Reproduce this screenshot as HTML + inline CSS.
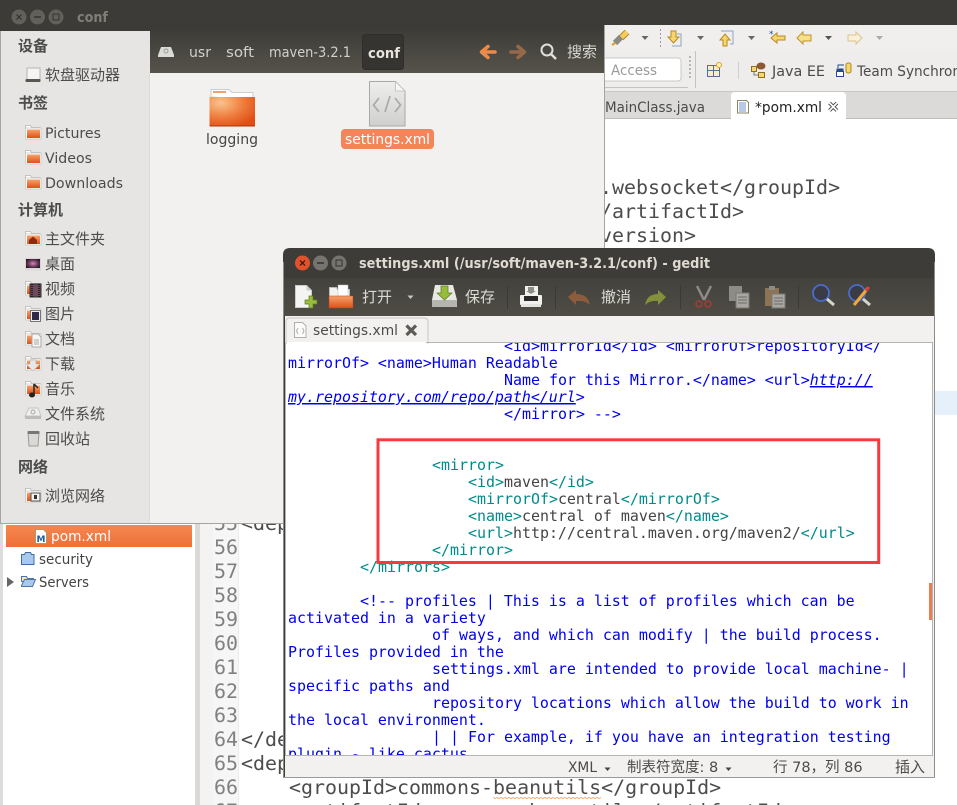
<!DOCTYPE html>
<html lang="zh"><head><meta charset="utf-8"><title>settings.xml</title>
<style>
html,body{margin:0;padding:0;background:#fff;width:957px;height:805px;overflow:hidden}
svg{display:block;position:absolute;left:0;top:0}
text{white-space:pre}
.u{font-family:"DejaVu Sans","Noto Sans CJK SC",sans-serif;font-size:14px}
.z{font-family:"Liberation Sans","Noto Sans CJK SC",sans-serif;font-size:15px}
.m{font-family:"DejaVu Sans Mono","Liberation Mono",monospace;font-size:14.95px}
.c{font-family:"DejaVu Sans Mono","Liberation Mono",monospace;font-size:19.95px;fill:#4c4c4c}
.n{font-family:"DejaVu Sans Mono","Liberation Mono",monospace;font-size:19.95px;fill:#808080}
.side{fill:#4c4c4c}
.b{fill:#0000f0}
.t{fill:#008b8b}
.d{fill:#444}
.i{font-style:italic}
</style></head><body>
<svg width="957" height="805" viewBox="0 0 957 805" xmlns="http://www.w3.org/2000/svg">
<defs>
<linearGradient id="path" x1="0" y1="0" x2="0" y2="1"><stop offset="0" stop-color="#3e3d39"/><stop offset="1" stop-color="#55534a"/></linearGradient>
<linearGradient id="gt" x1="0" y1="0" x2="0" y2="1"><stop offset="0" stop-color="#43423d"/><stop offset="1" stop-color="#4e4c44"/></linearGradient>
<linearGradient id="org" x1="0" y1="0" x2="0" y2="1"><stop offset="0" stop-color="#f5a36b"/><stop offset="1" stop-color="#e0501a"/></linearGradient>
<radialGradient id="big" cx=".25" cy=".2" r=".9"><stop offset="0" stop-color="#f8c48e"/><stop offset=".55" stop-color="#ee7d3e"/><stop offset="1" stop-color="#e04e14"/></radialGradient>
<radialGradient id="desk" cx=".5" cy=".5" r=".6"><stop offset="0" stop-color="#c98ab5"/><stop offset=".6" stop-color="#60304f"/><stop offset="1" stop-color="#20141f"/></radialGradient>
<linearGradient id="org2" x1="0" y1="0" x2="0" y2="1"><stop offset="0" stop-color="#f5874f"/><stop offset="1" stop-color="#ee7038"/></linearGradient>
<linearGradient id="fil" x1="0" y1="0" x2="0" y2="1"><stop offset="0" stop-color="#eeeeec"/><stop offset="1" stop-color="#cfcfcd"/></linearGradient>
<g id="sf"><path d="M0.5 0.500h5l1 2h8.500v3h-14.500z" fill="#fff" stroke="#b5b5b2" stroke-width=".8"/><rect x=".5" y="3" width="15.500" height="11" fill="#fdfdfc" stroke="#c2c2bf" stroke-width=".7"/><rect x="2" y="4.500" width="13" height="8.500" fill="url(#org)"/></g>
</defs>

<!-- Eclipse background -->
<rect width="957" height="805" fill="#fff"/>
<rect width="957" height="25" fill="#3c3b37"/>
<rect x="600" y="25" width="357" height="26" fill="#f0efed"/>
<rect x="600" y="51" width="357" height="41" fill="#eeedeb"/>
<rect x="600" y="87" width="88" height="1" fill="#c4c3c1"/>
<rect x="600" y="91" width="357" height="1" fill="#c8c7c5"/>
<rect x="600" y="92" width="357" height="27" fill="#dbdad8"/>
<rect x="600" y="118" width="357" height="1" fill="#bdbcba"/>
<path d="M731 119V96q0-4 4-4h107q4 0 4 4v23z" fill="#fff"/>
<rect x="935" y="391" width="22" height="24" fill="#e6f0fb"/>

<!-- Eclipse toolbar -->
<g>
<path d="M621 38l6-6" stroke="#a88420" stroke-width="6.500"/><path d="M621 38l6-6" stroke="#f8cc5c" stroke-width="4.500"/>
<path d="M615 43l6-6" stroke="#8a8a82" stroke-width="6"/><path d="M612 45l3-2" stroke="#d9a020" stroke-width="2"/>
<path d="M641.500 36h7l-3.500 4z" fill="#666"/>
<path d="M660.500 29v19" stroke="#9a9a90" stroke-dasharray="2 2"/>
<path d="M671 31h5v6h3l-5.500 6-5.500-6h3z" fill="#f7d670" stroke="#b88a20"/><path d="M677 34h4v12h-9" fill="none" stroke="#8aa4c8"/>
<path d="M697 36h7l-3.500 4z" fill="#666"/>
<path d="M723 46v-6h-3l5-6 5 6h-3v6z" fill="#f7d670" stroke="#b88a20"/><path d="M721 31h12v13h-3" fill="none" stroke="#8aa4c8"/>
<path d="M748 36h7l-3.500 4z" fill="#666"/>
<path d="M771 38l6-5v3h8v4h-8v3z" fill="#f7d670" stroke="#b88a20"/><text x="769" y="37" font-size="9" fill="#234a9a" font-family="DejaVu Sans">*</text>
<path d="M797 38l6-6v3h8v6h-8v3z" fill="#f7e08a" stroke="#c09428"/>
<path d="M825 36h7l-3.500 4z" fill="#555"/>
<path d="M862 38l-6-6v3h-8v6h8v3z" fill="#f8f0d8" stroke="#dcc48c"/>
<path d="M876 36h7l-3.500 4z" fill="#aaa"/>
<rect x="600" y="58" width="81" height="23" rx="3" fill="#fff" stroke="#c9c8c6"/>
<text class="u" x="611" y="75" fill="#9a9a9a" textLength="46" lengthAdjust="spacingAndGlyphs">Access</text>
<path d="M690 56v24" stroke="#a5a59d" stroke-width="1.500" stroke-dasharray="2 2"/>
<rect x="695" y="51" width="1" height="37" fill="#c4c3c1"/>
<rect x="707.500" y="65.500" width="12" height="11" fill="#f8ecc8" stroke="#5a6f8c"/><path d="M707.500 70.500h12M713.500 65.500v11" stroke="#5a6f8c"/><circle cx="719" cy="65" r="2.500" fill="#fff2b0" stroke="#d8a830"/>
<rect x="738" y="62" width="1" height="17" fill="#cfcecc"/>
<rect x="751.500" y="66.500" width="5" height="5" fill="#f7d670" stroke="#8a7020"/><rect x="758.500" y="72.500" width="6" height="5" fill="#f7d670" stroke="#8a7020"/><path d="M754 72v3h4" fill="none" stroke="#777"/><ellipse cx="761" cy="66" rx="4.500" ry="3.500" fill="#8c5a32"/>
<text class="u" x="772" y="76" fill="#4b4b4b" textLength="53" lengthAdjust="spacingAndGlyphs">Java EE</text>
<rect x="836.500" y="71.500" width="7" height="5" fill="#fff" stroke="#234a8a"/><rect x="836.500" y="68.500" width="7" height="3" fill="#234a8a"/><rect x="846" y="63" width="5" height="10" rx="2" fill="#f7d670" stroke="#a88820"/><path d="M838 68v-3h6" fill="none" stroke="#234a8a"/>
<text class="u" x="857" y="76" fill="#4b4b4b" textLength="104" lengthAdjust="spacingAndGlyphs">Team Synchron</text>
<text class="u" x="605" y="112" fill="#4b4b4b" textLength="100" lengthAdjust="spacingAndGlyphs">MainClass.java</text>
<path d="M737.500 100.500h9l2 2v10.500h-11z" fill="#fff" stroke="#8a8468"/><path d="M739 103h7M739 105h7M739 107h7M739 109h7M739 111h7" stroke="#6f93cc"/>
<text class="u" x="755" y="112" fill="#222" textLength="67" lengthAdjust="spacingAndGlyphs">*pom.xml</text>
<path d="M829.500 103l7.500 7.500m0-7.500l-7.500 7.500" stroke="#444" stroke-width="3.600"/><path d="M829.500 103l7.500 7.500m0-7.500l-7.500 7.500" stroke="#fff" stroke-width="1.800"/>
</g>

<!-- Eclipse code -->
<text class="c" x="600" y="194">.websocket&lt;/groupId&gt;</text>
<text class="c" x="600" y="218">/artifactId&gt;</text>
<text class="c" x="600" y="242">version&gt;</text>

<!-- Project tree -->
<rect x="0" y="524" width="3" height="281" fill="#dddcda"/>
<rect x="6" y="525" width="186" height="22" fill="url(#org2)"/>
<path d="M35.500 529.500h8l3 3v11h-11z" fill="#fff" stroke="#b09a60"/><text x="36.500" y="542" font-family="DejaVu Sans" font-size="9" font-weight="bold" fill="#1f5f9f">M</text>
<text class="u" x="51" y="541" fill="#fff" textLength="60" lengthAdjust="spacingAndGlyphs">pom.xml</text>
<path d="M21.500 554.500h3l1-2h5l1 2h2.500v10h-12.500z" fill="#a8c8ec" stroke="#3f6da5"/>
<text class="u" x="39" y="564" fill="#444" textLength="54" lengthAdjust="spacingAndGlyphs">security</text>
<path d="M7 577l7 5-7 5z" fill="#666"/>
<path d="M21.500 576.500h5l1 2h6v3h-12z" fill="#f3e4a8" stroke="#4f74a8"/><path d="M21.500 585.500l3-6h11l-3 7h-11z" fill="#a8c8ec" stroke="#4f74a8"/>
<text class="u" x="39" y="587" fill="#444" textLength="50" lengthAdjust="spacingAndGlyphs">Servers</text>

<!-- Editor gutter -->
<rect x="195" y="524" width="5" height="281" fill="#dad9d7"/>
<rect x="200" y="524" width="13" height="281" fill="#f4f3f2"/>
<rect x="213" y="524" width="25" height="281" fill="#f6f6f6"/>
<rect x="238" y="524" width="1" height="281" fill="#ececec"/>
<text class="n" x="214" y="530">55</text>
<text class="n" x="214" y="554">56</text>
<text class="n" x="214" y="578">57</text>
<text class="n" x="214" y="602">58</text>
<text class="n" x="214" y="626">59</text>
<text class="n" x="214" y="650">60</text>
<text class="n" x="214" y="674">61</text>
<text class="n" x="214" y="698">62</text>
<text class="n" x="214" y="722">63</text>
<text class="n" x="214" y="746">64</text>
<text class="n" x="214" y="770">65</text>
<text class="n" x="214" y="794">66</text>
<text class="n" x="214" y="818">67</text>
<text class="c" x="241" y="530">&lt;dependency&gt;</text>
<text class="c" x="241" y="746">&lt;/dependency&gt;</text>
<text class="c" x="241" y="770">&lt;dependency&gt;</text>
<text class="c" x="289" y="794">&lt;groupId&gt;commons-beanutils&lt;/groupId&gt;</text>
<text class="c" x="289" y="818">&lt;artifactId&gt;commons-beanutils&lt;/artifactId&gt;</text>
<path d="M493 797.500l2 1 2-1 2 1 2-1 2 1 2-1 2 1 2-1 2 1 2-1 2 1 2-1 2 1 2-1 2 1 2-1 2 1 2-1 2 1 2-1 2 1 2-1 2 1 2-1 2 1 2-1 2 1 2-1 2 1 2-1 2 1 2-1 2 1 2-1 2 1 2-1 2 1 2-1 2 1 2-1 2 1 2-1 2 1 2-1 2 1 2-1 2 1 2-1 2 1 2-1 2 1 2-1 2 1 2-1" fill="none" stroke="#f0a060" stroke-width=".8"/>

<!-- Nautilus window -->
<path d="M0 524V9q0-6 6-6h593q6 0 6 6v515z" fill="#3c3b37"/>
<rect x="1" y="31" width="149" height="492" fill="#e6e5e3"/>
<rect x="150" y="31" width="454" height="42" fill="url(#path)"/>
<rect x="150" y="73" width="454" height="450" fill="#f2f1f0"/>
<rect x="149" y="73" width="1" height="450" fill="#dcdbd9"/>
<rect x="0" y="31" width="1" height="493" fill="#a5a4a1"/>
<rect x="604" y="25" width="1" height="499" fill="#a5a4a1"/>
<rect x="0" y="523" width="605" height="1" fill="#a5a4a1"/>
<circle cx="19" cy="17" r="7.500" fill="#61605b"/><path d="M16.500 14.500l5 5m0-5l-5 5" stroke="#33322f" stroke-width="1.200"/>
<circle cx="37.500" cy="17" r="7.500" fill="#61605b"/><path d="M34 17h7" stroke="#33322f" stroke-width="1.500"/>
<circle cx="56" cy="17" r="7.500" fill="#61605b"/><rect x="53" y="14" width="6" height="6" fill="none" stroke="#33322f"/>
<text class="u" x="77" y="22" font-weight="bold" fill="#7f7e79" font-size="14" textLength="31" lengthAdjust="spacingAndGlyphs">conf</text>

<!-- Sidebar -->
<g class="z side">
<text x="18" y="51" font-weight="bold">设备</text>
<text x="18" y="108" font-weight="bold">书签</text>
<text x="18" y="215" font-weight="bold">计算机</text>
<text x="18" y="472" font-weight="bold">网络</text>
<text x="45" y="80">软盘驱动器</text>
<text x="45" y="244">主文件夹</text>
<text x="45" y="269">桌面</text>
<text x="45" y="294">视频</text>
<text x="45" y="319">图片</text>
<text x="45" y="344">文档</text>
<text x="45" y="369">下载</text>
<text x="45" y="394">音乐</text>
<text x="45" y="419">文件系统</text>
<text x="45" y="444">回收站</text>
<text x="45" y="501">浏览网络</text>
</g>
<g class="u side">
<text x="45" y="138" textLength="56" lengthAdjust="spacingAndGlyphs">Pictures</text>
<text x="45" y="163" textLength="47" lengthAdjust="spacingAndGlyphs">Videos</text>
<text x="45" y="188" textLength="78" lengthAdjust="spacingAndGlyphs">Downloads</text>
</g>
<rect x="27" y="68" width="13" height="12" fill="#f4f4f2" stroke="#b5b5b2"/><rect x="25.500" y="79" width="15" height="3" rx="1" fill="#57564f"/>
<use href="#sf" x="25" y="125"/><use href="#sf" x="25" y="150"/><use href="#sf" x="25" y="175"/>
<use href="#sf" x="25" y="231"/><path d="M29 240l4-3.500 4 3.500v4h-8z" fill="#8c2a0c"/>
<rect x="25.500" y="258.500" width="15" height="10" fill="url(#desk)" stroke="#d5d5d2"/><rect x="25" y="269" width="16" height="2" fill="#ddd"/>
<use href="#sf" x="25" y="281"/><rect x="30" y="284" width="11" height="13" fill="#6c4a5c" stroke="#2d2d2d"/><path d="M32 284v13M39 284v13" stroke="#111" stroke-width="1.500" stroke-dasharray="1 1"/>
<use href="#sf" x="25" y="306"/><rect x="30.500" y="310.500" width="10" height="11" fill="#eee" stroke="#777"/><rect x="32" y="312" width="7" height="8" fill="#312847"/>
<use href="#sf" x="25" y="331"/><path d="M32 334h6l3 3v10h-9z" fill="#f5f5f3" stroke="#aaa"/><path d="M34 340h5M34 342h5M34 344h5" stroke="#aaa"/>
<use href="#sf" x="25" y="356"/><path d="M30 360h6v4h4l-7 7-7-7h4z" fill="#e7e7e4" stroke="#aaa" stroke-width=".5"/>
<use href="#sf" x="25" y="381"/><path d="M34 384v11" stroke="#222" stroke-width="1.500"/><ellipse cx="32" cy="395" rx="3" ry="2.500" fill="#222"/><path d="M34 384l4 4" stroke="#222" stroke-width="1.500"/>
<path d="M29 408h9l3 8H25z" fill="#efefed" stroke="#c5c5c2"/><rect x="25" y="416" width="16" height="3" fill="#bcbcb8"/><circle cx="33" cy="412" r="2" fill="none" stroke="#a9a9a6"/>
<path d="M28 432h11l-1 14h-9z" fill="#d9d9d6" stroke="#9a9a96"/><rect x="27.500" y="431" width="12" height="3" rx="1" fill="#777"/>
<use href="#sf" x="25" y="488"/><rect x="31" y="493" width="9" height="8" fill="#f2f2f0" stroke="#555"/><rect x="34" y="495" width="3" height="4" fill="#333"/>

<!-- Path bar -->
<path d="M161 47h10l3 8v2h-16v-2z" fill="#dadad6"/><circle cx="166" cy="51" r="2" fill="none" stroke="#999"/>
<g class="u" fill="#d2d1ca">
<text x="189" y="57" textLength="22" lengthAdjust="spacingAndGlyphs">usr</text>
<text x="226" y="57" textLength="28" lengthAdjust="spacingAndGlyphs">soft</text>
<text x="269" y="57" textLength="82" lengthAdjust="spacingAndGlyphs">maven-3.2.1</text>
</g>
<rect x="362.500" y="34.500" width="41" height="35" rx="3" fill="#353430" stroke="#2e2d2a"/>
<text class="u" x="368" y="58" font-weight="bold" fill="#e6e4dc" textLength="32" lengthAdjust="spacingAndGlyphs">conf</text>
<path d="M495 52H483M488 46.500l-6.500 5.500 6.500 5.500" fill="none" stroke="#ec8a4a" stroke-width="3.500" stroke-linecap="round" stroke-linejoin="round"/>
<path d="M511 52H523M518 46.500l6.500 5.500-6.500 5.500" fill="none" stroke="#96694a" stroke-width="3.500" stroke-linecap="round" stroke-linejoin="round"/>
<circle cx="547" cy="50" r="5.500" fill="none" stroke="#e0dfd8" stroke-width="2"/><path d="M551 54l5 5" stroke="#e0dfd8" stroke-width="2.500"/>
<text class="z" x="567" y="57" fill="#d8d7d0">搜索</text>

<!-- Files -->
<path d="M211 97v-7.500h18l3 3h21v7z" fill="#fff" stroke="#cdcdc8"/><rect x="213" y="91" width="13" height="2" fill="#f0a070"/>
<rect x="209.500" y="97" width="45.500" height="29" fill="url(#big)"/><path d="M209.500 126h45.500" stroke="#a43a10"/>
<text class="u" x="206" y="144" fill="#444" textLength="52" lengthAdjust="spacingAndGlyphs">logging</text>
<path d="M369.500 81.500h26l9.500 9.500v35h-35.500z" fill="url(#fil)" stroke="#a9a9a6"/><path d="M395.500 81.500v9.500h9.500z" fill="#f8f8f6" stroke="#c5c5c2"/>
<path d="M379 98l-5.500 7 5.500 7M395 98l5.500 7-5.500 7M390 96l-5 16" fill="none" stroke="#a9a9a6" stroke-width="1.700"/>
<rect x="341" y="129" width="93" height="20" rx="4" fill="#f4855a"/>
<text class="u" x="345" y="144" fill="#fff" textLength="85" lengthAdjust="spacingAndGlyphs">settings.xml</text>

<!-- Gedit window -->
<path d="M283 778V255q0-7 7-7h638q7 0 7 7v523z" fill="#3d3c38"/>
<rect x="284" y="278" width="650" height="38" fill="url(#gt)"/>
<rect x="285" y="316" width="649" height="461" fill="#f2f1f0"/>
<rect x="283" y="262" width="1" height="516" fill="#8c8b87"/>
<rect x="934" y="262" width="1" height="516" fill="#8c8b87"/>
<rect x="283" y="777" width="652" height="1" fill="#9b9a97"/>
<rect x="285.500" y="342.500" width="647" height="413" fill="#fff" stroke="#b5b4b2"/>
<path d="M286 343v-21q0-4 4-4h134q4 0 4 4v21z" fill="#f2f1f0" stroke="#c8c7c5"/><rect x="287" y="342" width="140" height="2" fill="#fff"/>
<rect x="426" y="342" width="507" height="1" fill="#b5b4b2"/>
<circle cx="302.500" cy="263" r="7.500" fill="#e1522b"/><path d="M300 260.500l5 5m0-5l-5 5" stroke="#4a1b0c" stroke-width="1.300"/>
<circle cx="320.500" cy="263" r="7.500" fill="#76746e"/><path d="M317 263h7" stroke="#33322f" stroke-width="1.500"/>
<circle cx="339" cy="263" r="7.500" fill="#76746e"/><rect x="336" y="260" width="6" height="6" fill="none" stroke="#33322f"/>
<text class="u" x="359" y="268" font-weight="bold" fill="#dfdbd2" textLength="351" lengthAdjust="spacingAndGlyphs">settings.xml (/usr/soft/maven-3.2.1/conf) - gedit</text>

<!-- Gedit toolbar -->
<path d="M295.500 285.500h11l5 5v17h-16z" fill="#f4f4f2" stroke="#ccc"/><path d="M306.500 285.500v5h5z" fill="#ccc"/>
<path d="M309 296h4v4h4v4h-4v4h-4v-4h-4v-4h4z" fill="#9bbd3c" stroke="#5f7a20" stroke-width=".7"/>
<path d="M329.500 287.500h7l1 2h12v10h-20z" fill="#f2f2f0" stroke="#bbb"/><rect x="338" y="285" width="10" height="11" fill="#fff" stroke="#bbb" stroke-width=".5"/>
<rect x="329" y="296" width="24" height="12" fill="url(#org)" stroke="#b8431a" stroke-width=".5"/>
<text class="z" x="362" y="302" fill="#dcdbd3">打开</text>
<path d="M407.500 295.500h6l-3 3.500z" fill="#c9c8c1"/>
<path d="M435 285h18l4 15v7h-25v-7z" fill="#e8e8e5"/><rect x="432" y="300" width="25" height="7" rx="1" fill="#b5b5b0"/><path d="M441 286h7v7h4l-7.500 7-7.500-7h4z" fill="#97bb3a" stroke="#5d7a22" stroke-width=".7"/>
<text class="z" x="465" y="302" fill="#dcdbd3">保存</text>
<rect x="507" y="285" width="1" height="24" fill="#3a3935"/>
<rect x="525" y="286" width="13" height="9" fill="#f1f1ee"/><path d="M528 287h6v4h2l-5 3-5-3h2z" fill="#8c8c88"/>
<rect x="520" y="295" width="22" height="10" rx="1" fill="#f0f0ed"/><rect x="524" y="296" width="14" height="5" fill="#2b2a28"/><rect x="521" y="304" width="20" height="3" fill="#e2e2de"/>
<rect x="555" y="285" width="1" height="24" fill="#3a3935"/>
<path d="M568 297l8-7v4q12 0 14 11-5-5-14-4v4z" fill="#8d5c3c"/>
<text class="z" x="601" y="302" fill="#dcdbd3">撤消</text>
<path d="M666 297l-8-7v4q-11 0-13 11 5-5 13-4v4z" fill="#83913c"/>
<rect x="680" y="285" width="1" height="24" fill="#3a3935"/>
<path d="M697 286l7 14M711 286l-7 14" stroke="#8c8b85" stroke-width="2.500"/><circle cx="699" cy="304" r="3" fill="none" stroke="#a83c34" stroke-width="1.500"/><circle cx="708" cy="304" r="3" fill="none" stroke="#a83c34" stroke-width="1.500"/>
<rect x="729" y="286" width="13" height="15" fill="#8d8c86"/><rect x="736" y="293" width="13" height="15" fill="#a7a6a0" stroke="#777"/><path d="M738 297h9M738 300h9M738 303h9" stroke="#6d6c67"/>
<rect x="765" y="288" width="14" height="18" fill="#8d7454"/><rect x="769" y="286" width="6" height="4" fill="#8c8b85"/><rect x="772" y="294" width="13" height="14" fill="#a7a6a0" stroke="#777"/><path d="M774 298h9M774 301h9M774 304h9" stroke="#6d6c67"/>
<rect x="798" y="285" width="1" height="24" fill="#3a3935"/>
<circle cx="821" cy="293" r="8" fill="#3a3b44" stroke="#4a6cca" stroke-width="1.800"/><path d="M827 299l7 6" stroke="#d5d5cf" stroke-width="3"/>
<circle cx="857" cy="293" r="8" fill="#3a3b44" stroke="#4a6cca" stroke-width="1.800"/><path d="M863 299l7 6" stroke="#d5d5cf" stroke-width="3"/><path d="M854 305l14-17" stroke="#f2a838" stroke-width="3"/><path d="M866 291l3-4" stroke="#d8403a" stroke-width="3"/>

<!-- Gedit tab -->
<path d="M294.500 322.500h8l3.500 3.500v11.500h-11.500z" fill="#fbfbfa" stroke="#b0b0ad"/><path d="M298 328l-1.500 3 1.500 3M302.500 328l1.500 3-1.500 3" fill="none" stroke="#b0b0ad"/>
<text class="u" x="313" y="335" fill="#4b4b4b" textLength="85" lengthAdjust="spacingAndGlyphs">settings.xml</text>
<path d="M406.500 325.500l9.500 9.500m0-9.500l-9.500 9.500" stroke="#5c5b57" stroke-width="3.200"/>

<!-- Gedit text -->
<svg x="286" y="343" width="646" height="412" viewBox="286 343 646 412">
<g class="m">
<text class="b" x="504" y="351">&lt;id&gt;mirrorId&lt;/id&gt; &lt;mirrorOf&gt;repositoryId&lt;/</text>
<text class="b" x="288" y="368">mirrorOf&gt; &lt;name&gt;Human Readable</text>
<text class="b" x="504" y="385">Name for this Mirror.&lt;/name&gt; &lt;url&gt;<tspan class="i" text-decoration="underline">http://</tspan></text>
<text class="b" x="288" y="402"><tspan class="i" text-decoration="underline">my.repository.com/repo/path&lt;/url</tspan>&gt;</text>
<text class="b" x="504" y="419">&lt;/mirror&gt; --&gt;</text>
<text class="t" x="432" y="470">&lt;mirror&gt;</text>
<text x="468" y="487"><tspan class="t">&lt;id&gt;</tspan><tspan class="d">maven</tspan><tspan class="t">&lt;/id&gt;</tspan></text>
<text x="468" y="504"><tspan class="t">&lt;mirrorOf&gt;</tspan><tspan class="d">central</tspan><tspan class="t">&lt;/mirrorOf&gt;</tspan></text>
<text x="468" y="521"><tspan class="t">&lt;name&gt;</tspan><tspan class="d">central of maven</tspan><tspan class="t">&lt;/name&gt;</tspan></text>
<text x="468" y="538"><tspan class="t">&lt;url&gt;</tspan><tspan class="d">http://central.maven.org/maven2/</tspan><tspan class="t">&lt;/url&gt;</tspan></text>
<text class="t" x="432" y="555">&lt;/mirror&gt;</text>
<text class="t" x="360" y="572">&lt;/mirrors&gt;</text>
<text class="b" x="360" y="606">&lt;!-- profiles | This is a list of profiles which can be</text>
<text class="b" x="288" y="623">activated in a variety</text>
<text class="b" x="432" y="640">of ways, and which can modify | the build process.</text>
<text class="b" x="288" y="657">Profiles provided in the</text>
<text class="b" x="432" y="674">settings.xml are intended to provide local machine- |</text>
<text class="b" x="288" y="691">specific paths and</text>
<text class="b" x="432" y="708">repository locations which allow the build to work in</text>
<text class="b" x="288" y="725">the local environment.</text>
<text class="b" x="432" y="742">| | For example, if you have an integration testing</text>
<text class="b" x="288" y="759">plugin - like cactus</text>
</g>
</svg>
<rect x="929" y="583" width="3" height="37" fill="#ee7b4d"/>

<!-- Red highlight -->
<rect x="378" y="439.800" width="500.700" height="122.700" fill="none" stroke="#f93a3c" stroke-width="3"/>

<!-- Status bar -->
<g class="u" fill="#4b4b4b">
<text x="568" y="772" textLength="29" lengthAdjust="spacingAndGlyphs">XML</text>
<text x="627" y="772" font-size="14.500">制表符宽度: 8</text>
<text x="773" y="772" font-size="14.500">行 78，列 86</text>
<text x="895" y="772" font-size="15">插入</text>
</g>
<path d="M604.500 767.500h6l-3 3.500z" fill="#444"/>
<path d="M725.500 767.500h6l-3 3.500z" fill="#444"/>
</svg>
</body></html>
